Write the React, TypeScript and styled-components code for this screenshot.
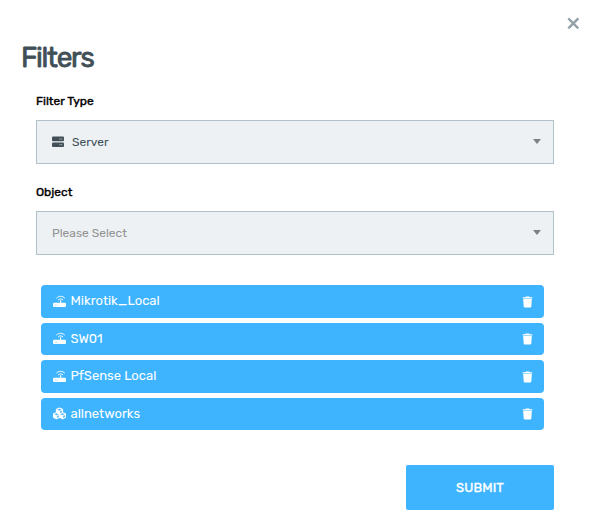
import React from 'react';
import styled, { createGlobalStyle } from 'styled-components';
import { FaCubes } from 'react-icons/fa';

const GlobalStyle = createGlobalStyle`
  * { box-sizing: border-box; }
  body { margin: 0; background: #fff; font-family: Rubik, Roboto, sans-serif; }
`;

const Dialog = styled.main`
  width: 591px;
  height: 526px;
  background: #fff;
  overflow: hidden;
`;
const TopBar = styled.header`
  display: flex;
  justify-content: flex-end;
  height: 41px;
  padding: 17px 12px 0 0;
`;
const CloseButton = styled.button`
  display: flex;
  width: 12px;
  height: 12px;
  padding: 0;
  border: 0;
  background: none;
`;
const Title = styled.h1`
  margin: 0 0 0 21px;
  height: 52px;
  font-size: 28px;
  line-height: 34px;
  font-weight: 400;
  letter-spacing: -1.3px;
  color: #414f57;
  -webkit-text-stroke: 0.8px #414f57;
`;
const Form = styled.form`
  padding: 0 37px 0 36px;
`;
const Field = styled.div`
  height: 91px;
`;
const Label = styled.label`
  display: block;
  height: 27px;
  line-height: 16px;
  font-size: 12px;
  font-weight: 400;
  color: #000;
  -webkit-text-stroke: 0.4px #000;
`;
const Select = styled.div<{ $placeholder?: boolean }>`
  display: flex;
  align-items: center;
  height: 44px;
  padding: 0 12px 0 15px;
  border: 1px solid #b0c2c9;
  background: #edf1f4;
  font-size: 12px;
  font-weight: 400;
  color: ${p => (p.$placeholder ? '#929292' : '#414f57')};
`;
const SelectText = styled.span`
  flex: 1;
`;
const ServerGlyph = styled.svg`
  width: 12px;
  height: 12px;
  margin-right: 8px;
`;
const Caret = styled.span`
  width: 0;
  height: 0;
  margin-top: -1px;
  border: 4px solid transparent;
  border-top: 5px solid #808080;
  border-bottom: 0;
`;
const List = styled.ul`
  display: flex;
  flex-direction: column;
  gap: 5px;
  margin: 10px 10px 0 5px;
  padding: 0;
  list-style: none;
`;
const Chip = styled.li`
  display: flex;
  align-items: center;
  height: 32.55px;
  padding: 0 11px 0 12px;
  border-radius: 4px;
  background: #3eb4ff;
  color: #fff;
  font-size: 13px;
  font-weight: 400;
`;
const ChipIcon = styled.span`
  display: flex;
  width: 13px;
  margin-right: 4.5px;
`;
const ChipText = styled.span`
  flex: 1;
  padding-bottom: 1px;
`;
const Remove = styled.button`
  display: flex;
  padding: 1px 0 0;
  border: 0;
  background: none;
  color: #fff;
`;
const Footer = styled.footer`
  display: flex;
  justify-content: flex-end;
  margin-top: 35px;
`;
const Submit = styled.button`
  width: 148px;
  height: 45px;
  padding: 0;
  border: 0;
  border-radius: 2px;
  background: #3eb4ff;
  color: #fff;
  font: 400 13px Rubik, Roboto, sans-serif;
  letter-spacing: 0.08px;
  -webkit-text-stroke: 0.35px #fff;
`;

const RouterIcon = () => (
  <svg width="13" height="13" viewBox="0 0 13 13" fill="none" stroke="#fff">
    <path d="M3.4 3.2C5.8.7 9.4.7 11.8 3.2M5.2 5C6.6 3.5 8.6 3.5 10 5" strokeWidth="1" />
    <path d="M7.6 5.2v3.2" strokeWidth="1.1" />
    <path
      fill="#fff"
      stroke="none"
      fillRule="evenodd"
      d="M1.1 7.8h10.8q1.1 0 1.1 1.1v2q0 1.1-1.1 1.1H1.1Q0 12 0 10.9v-2Q0 7.8 1.1 7.8ZM1.7 9.8v.7h.8v-.7ZM3.6 9.8v.7h.8v-.7Z"
    />
  </svg>
);

const CubesIcon = () => <FaCubes size={13} stroke="currentColor" strokeWidth={12} />;

const TrashIcon = () => (
  <svg width="11" height="12" viewBox="0 0 11 12" fill="currentColor">
    <path d="M3.8.5h3.4l.5.7h2.6v1.2H.7V1.2h2.6ZM1.2 3h8.6l-.5 7.5q-.1 1-1.1 1H2.8q-1 0-1.1-1Z" />
  </svg>
);

const objects = [
  { name: 'Mikrotik_Local', group: false },
  { name: 'SW01', group: false },
  { name: 'PfSense Local', group: false },
  { name: 'allnetworks', group: true },
];

export default function App() {
  return (
    <Dialog>
      <GlobalStyle />
      <TopBar>
        <CloseButton aria-label="Close">
          <svg width="12" height="12" viewBox="0 0 12 12" stroke="#93a2a9" strokeWidth="2.4">
            <path d="M1.3 1.4l10 10M11.3 1.4l-10 10" />
          </svg>
        </CloseButton>
      </TopBar>
      <Title>Filters</Title>
      <Form onSubmit={e => e.preventDefault()}>
        <Field>
          <Label>Filter Type</Label>
          <Select>
            <ServerGlyph viewBox="0 0 12 12">
              <rect y=".6" width="12" height="4.6" rx="1" fill="#414f57" />
              <rect y="6.4" width="12" height="4.6" rx="1" fill="#414f57" />
              <path d="M7.5 3h.9M9.4 3h.9M7.5 8.7h.9M9.4 8.7h.9" stroke="#edf1f4" strokeWidth=".9" />
            </ServerGlyph>
            <SelectText>Server</SelectText>
            <Caret />
          </Select>
        </Field>
        <Field>
          <Label>Object</Label>
          <Select $placeholder>
            <SelectText>Please Select</SelectText>
            <Caret />
          </Select>
        </Field>
        <List>
          {objects.map(o => (
            <Chip key={o.name}>
              <ChipIcon>{o.group ? <CubesIcon /> : <RouterIcon />}</ChipIcon>
              <ChipText>{o.name}</ChipText>
              <Remove type="button" aria-label={`Remove ${o.name}`}>
                <TrashIcon />
              </Remove>
            </Chip>
          ))}
        </List>
        <Footer>
          <Submit>SUBMIT</Submit>
        </Footer>
      </Form>
    </Dialog>
  );
}
